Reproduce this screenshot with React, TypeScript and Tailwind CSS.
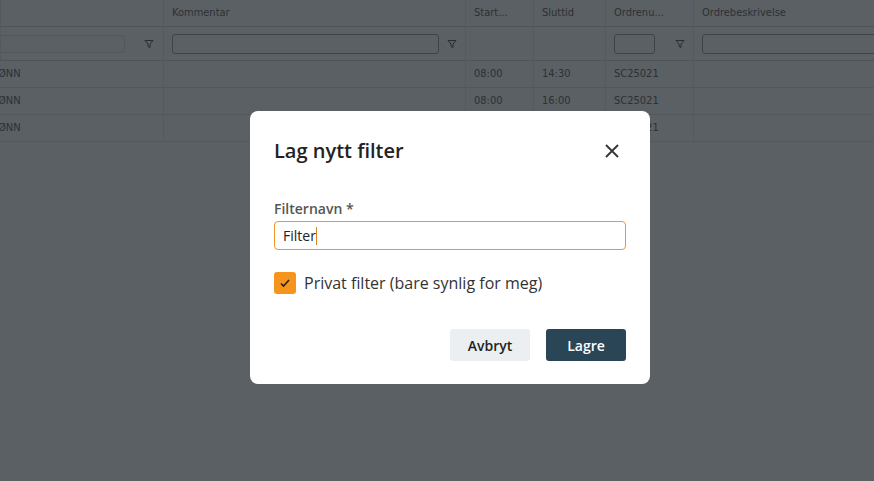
import React from "react";

const cols = [
  { w: 163, h: "", f: "wide" },
  { w: 302, h: "Kommentar", f: "input" },
  { w: 68, h: "Start...", f: "" },
  { w: 72, h: "Sluttid", f: "" },
  { w: 88, h: "Ordrenu...", f: "small" },
  { w: 300, h: "Ordrebeskrivelse", f: "input2" },
];
const rows = [
  ["ØNN", "", "08:00", "14:30", "SC25021", ""],
  ["ØNN", "", "08:00", "16:00", "SC25021", ""],
  ["ØNN", "", "", "", "SC25021", ""],
];

const Funnel = () => (
  <svg width="10" height="10" viewBox="0 0 10 10" fill="none" stroke="#2a2d30" strokeWidth="1">
    <path d="M1 1.5h8L6 5v3.5L4 7.5V5z" />
  </svg>
);

export default function App() {
  return (
    <div className="relative w-[874px] h-[481px] overflow-hidden bg-[#5b6064] text-[11px] text-[#2c3034]" style={{ fontFamily: '"DejaVu Sans Condensed","Liberation Sans",sans-serif' }}>
      <div className="flex h-[27px] border-b border-[#4f5458]">
        {cols.map((c, i) => (
          <div key={i} className="shrink-0 flex items-center px-2 border-l border-[#555a5e]" style={{ width: c.w }}>{c.h}</div>
        ))}
      </div>
      <div className="flex h-[34px] border-b border-[#4f5458]">
        {cols.map((c, i) => (
          <div key={i} className="shrink-0 flex items-center gap-2 px-2 border-l border-[#555a5e]" style={{ width: c.w }}>
            {c.f === "wide" && (<><div className="ml-[-20px] w-[136px] h-[18px] rounded-[3px] border border-[#52575b]" /><span className="ml-[11px]"><Funnel /></span></>)}
            {c.f === "input" && (<><div className="flex-1 h-[20px] rounded-[3px] border border-[#3f4448]" /><Funnel /></>)}
            {c.f === "small" && (<><div className="w-[46px] h-[20px] rounded-[3px] border border-[#3f4448]" /><span className="ml-3"><Funnel /></span></>)}
            {c.f === "input2" && <div className="flex-1 h-[20px] rounded-[3px] border border-[#3f4448]" />}
          </div>
        ))}
      </div>
      {rows.map((r, ri) => (
        <div key={ri} className="flex h-[27px] border-b border-[#53585c]">
          {cols.map((c, i) => (
            <div key={i} className={"shrink-0 flex items-center border-l border-[#555a5e] " + (i === 0 ? "pl-0 ml-[-3px]" : "px-2")} style={{ width: i === 0 ? c.w + 3 : c.w }}>{r[i]}</div>
          ))}
        </div>
      ))}

      <div className="absolute left-[250px] top-[111px] w-[400px] h-[273px] bg-white rounded-[8px] px-6 pt-[25px]" style={{ fontFamily: '"Open Sans",sans-serif' }}>
        <div className="flex items-center justify-between">
          <h2 className="text-[20px] font-semibold text-[#222]">Lag nytt filter</h2>
          <svg width="16" height="16" viewBox="0 0 16 16" stroke="#333" strokeWidth="1.8" className="mr-[6px]"><path d="M2 2l12 12M14 2L2 14" /></svg>
        </div>
        <div className="mt-[32px] text-[14px] font-semibold text-[#555]">Filternavn *</div>
        <div className="mt-[2px] h-[29px] rounded-[4px] border border-[#f0962a] flex items-center px-[8px] text-[14px] text-[#222]">
          Filter<span className="w-px h-[18px] bg-[#e08020]" />
        </div>
        <div className="mt-[21px] flex items-center gap-[8px]">
          <div className="w-[22px] h-[22px] rounded-[3px] bg-[#f7941d] flex items-center justify-center">
            <svg width="12" height="12" viewBox="0 0 12 12" fill="none" stroke="#222" strokeWidth="1.6"><path d="M2 6.5l2.5 2.5L10 3" /></svg>
          </div>
          <span className="text-[16px] text-[#333]">Privat filter (bare synlig for meg)</span>
        </div>
        <div className="mt-[34px] flex justify-end gap-[16px]">
          <button className="w-[80px] h-[32px] rounded-[3px] bg-[#eceff1] text-[14px] font-semibold text-[#222]">Avbryt</button>
          <button className="w-[80px] h-[32px] rounded-[3px] bg-[#2a4556] text-[14px] font-semibold text-white">Lagre</button>
        </div>
      </div>
    </div>
  );
}
